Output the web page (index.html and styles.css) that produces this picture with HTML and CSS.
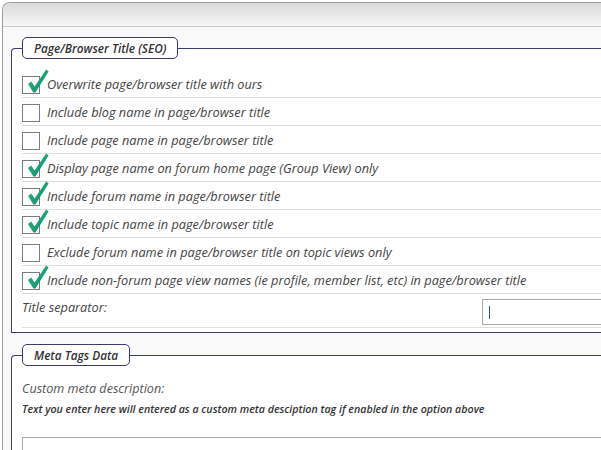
FILE: index.html
```html
<!DOCTYPE html>
<html>
<head>
<meta charset="utf-8">
<link rel="stylesheet" href="styles.css">
</head>
<body>
<div class="panel">
  <div class="panel-head"></div>
  <div class="panel-body">
    <fieldset class="group">
      <legend class="group-title">Page/Browser Title (SEO)</legend>
      <div class="row"><span class="box"><svg class="tick" viewBox="0 0 22 24"><defs><linearGradient id="g1" x1="0" y1="0" x2="1" y2="1"><stop offset="0" stop-color="#23b98a"/><stop offset="1" stop-color="#0f8c62"/></linearGradient></defs><path d="M1 15 L4.2 12.6 L7.6 17.6 L19.2 0.6 L21.6 2.4 L8.4 23.4 L6.4 23.4 Z" fill="url(#g1)"/></svg></span><span class="label">Overwrite page/browser title with ours</span></div>
      <div class="row"><span class="box"></span><span class="label">Include blog name in page/browser title</span></div>
      <div class="row"><span class="box"></span><span class="label">Include page name in page/browser title</span></div>
      <div class="row"><span class="box"><svg class="tick" viewBox="0 0 22 24"><path d="M1 15 L4.2 12.6 L7.6 17.6 L19.2 0.6 L21.6 2.4 L8.4 23.4 L6.4 23.4 Z" fill="url(#g1)"/></svg></span><span class="label">Display page name on forum home page (Group View) only</span></div>
      <div class="row"><span class="box"><svg class="tick" viewBox="0 0 22 24"><path d="M1 15 L4.2 12.6 L7.6 17.6 L19.2 0.6 L21.6 2.4 L8.4 23.4 L6.4 23.4 Z" fill="url(#g1)"/></svg></span><span class="label">Include forum name in page/browser title</span></div>
      <div class="row"><span class="box"><svg class="tick" viewBox="0 0 22 24"><path d="M1 15 L4.2 12.6 L7.6 17.6 L19.2 0.6 L21.6 2.4 L8.4 23.4 L6.4 23.4 Z" fill="url(#g1)"/></svg></span><span class="label">Include topic name in page/browser title</span></div>
      <div class="row"><span class="box"></span><span class="label">Exclude forum name in page/browser title on topic views only</span></div>
      <div class="row"><span class="box"><svg class="tick" viewBox="0 0 22 24"><path d="M1 15 L4.2 12.6 L7.6 17.6 L19.2 0.6 L21.6 2.4 L8.4 23.4 L6.4 23.4 Z" fill="url(#g1)"/></svg></span><span class="label">Include non-forum page view names (ie profile, member list, etc) in page/browser title</span></div>
      <div class="row row-field"><span class="field-name">Title separator:</span><span class="input"><span class="caret"></span></span></div>
    </fieldset>
    <fieldset class="group group-meta">
      <legend class="group-title">Meta Tags Data</legend>
      <div class="desc-title">Custom meta description:</div>
      <div class="desc-help">Text you enter here will entered as a custom meta desciption tag if enabled in the option above</div>
      <div class="textarea"></div>
    </fieldset>
  </div>
</div>
</body>
</html>
```

FILE: styles.css
```css
html, body {
  margin: 0;
  padding: 0;
  background: #fff;
  overflow: hidden;
}
body {
  width: 601px;
  height: 450px;
  font-family: "Open Sans", "Noto Sans", sans-serif;
}
.panel {
  margin: 2px 0 0 2px;
  width: 900px;
  height: 600px;
  border: 1px solid #9c9c9c;
  border-right: none;
  border-bottom: none;
  border-top-left-radius: 8px;
  background: #f9f9f9;
}
.panel-head {
  height: 23px;
  border-top-left-radius: 7px;
  background: linear-gradient(#dadada, #f6f6f6);
  border-bottom: 1px solid #c9c9c9;
}
.panel-body {
  padding: 10px 0 0 8px;
}
.group {
  margin: 0;
  padding: 11px 0 4px 10px;
  border: 1px solid #383d6b;
  border-right: none;
  border-top-left-radius: 4px;
  background: #fff;
  min-width: 0;
}
.group-meta {
  margin-top: 11px;
  height: 200px;
}
.group-title {
  padding: 0 11px;
  border: 1px solid #383d6b;
  border-radius: 5px;
  background: #fff;
  font-style: italic;
  font-weight: 600;
  font-size: 11.8px;
  line-height: 20px;
  color: #333;
}
.row {
  display: flex;
  align-items: flex-start;
  height: 21px;
  padding-top: 6px;
  border-bottom: 1px solid #ddd;
}
.box {
  position: relative;
  flex: none;
  width: 16px;
  height: 16px;
  border: 1px solid #7d7d7d;
  background: #fff;
  margin-right: 7px;
}
.tick {
  position: absolute;
  left: 4px;
  top: -8px;
  width: 22px;
  height: 24px;
}
.label, .field-name {
  font-style: italic;
  font-size: 12.75px;
  line-height: 17px;
  color: #444;
  white-space: nowrap;
}
.row-field {
  height: auto;
  padding: 5px 0 2px;
}
.field-name {
  width: 460px;
  flex: none;
}
.input {
  display: block;
  width: 200px;
  height: 24px;
  border: 1px solid #aaa;
  background: #fff;
}
.caret {
  display: block;
  margin: 6px 0 0 6px;
  width: 1px;
  height: 13px;
  background: #34547e;
}
.desc-title {
  margin-top: 3px;
  font-style: italic;
  font-size: 12.6px;
  line-height: 18px;
  color: #555;
}
.desc-help {
  margin-top: 2px;
  font-style: italic;
  font-weight: 600;
  font-size: 10.65px;
  line-height: 18px;
  color: #333;
  white-space: nowrap;
}
.textarea {
  margin-top: 19px;
  width: 700px;
  height: 100px;
  border: 1px solid #aaa;
  background: #fff;
}
```
